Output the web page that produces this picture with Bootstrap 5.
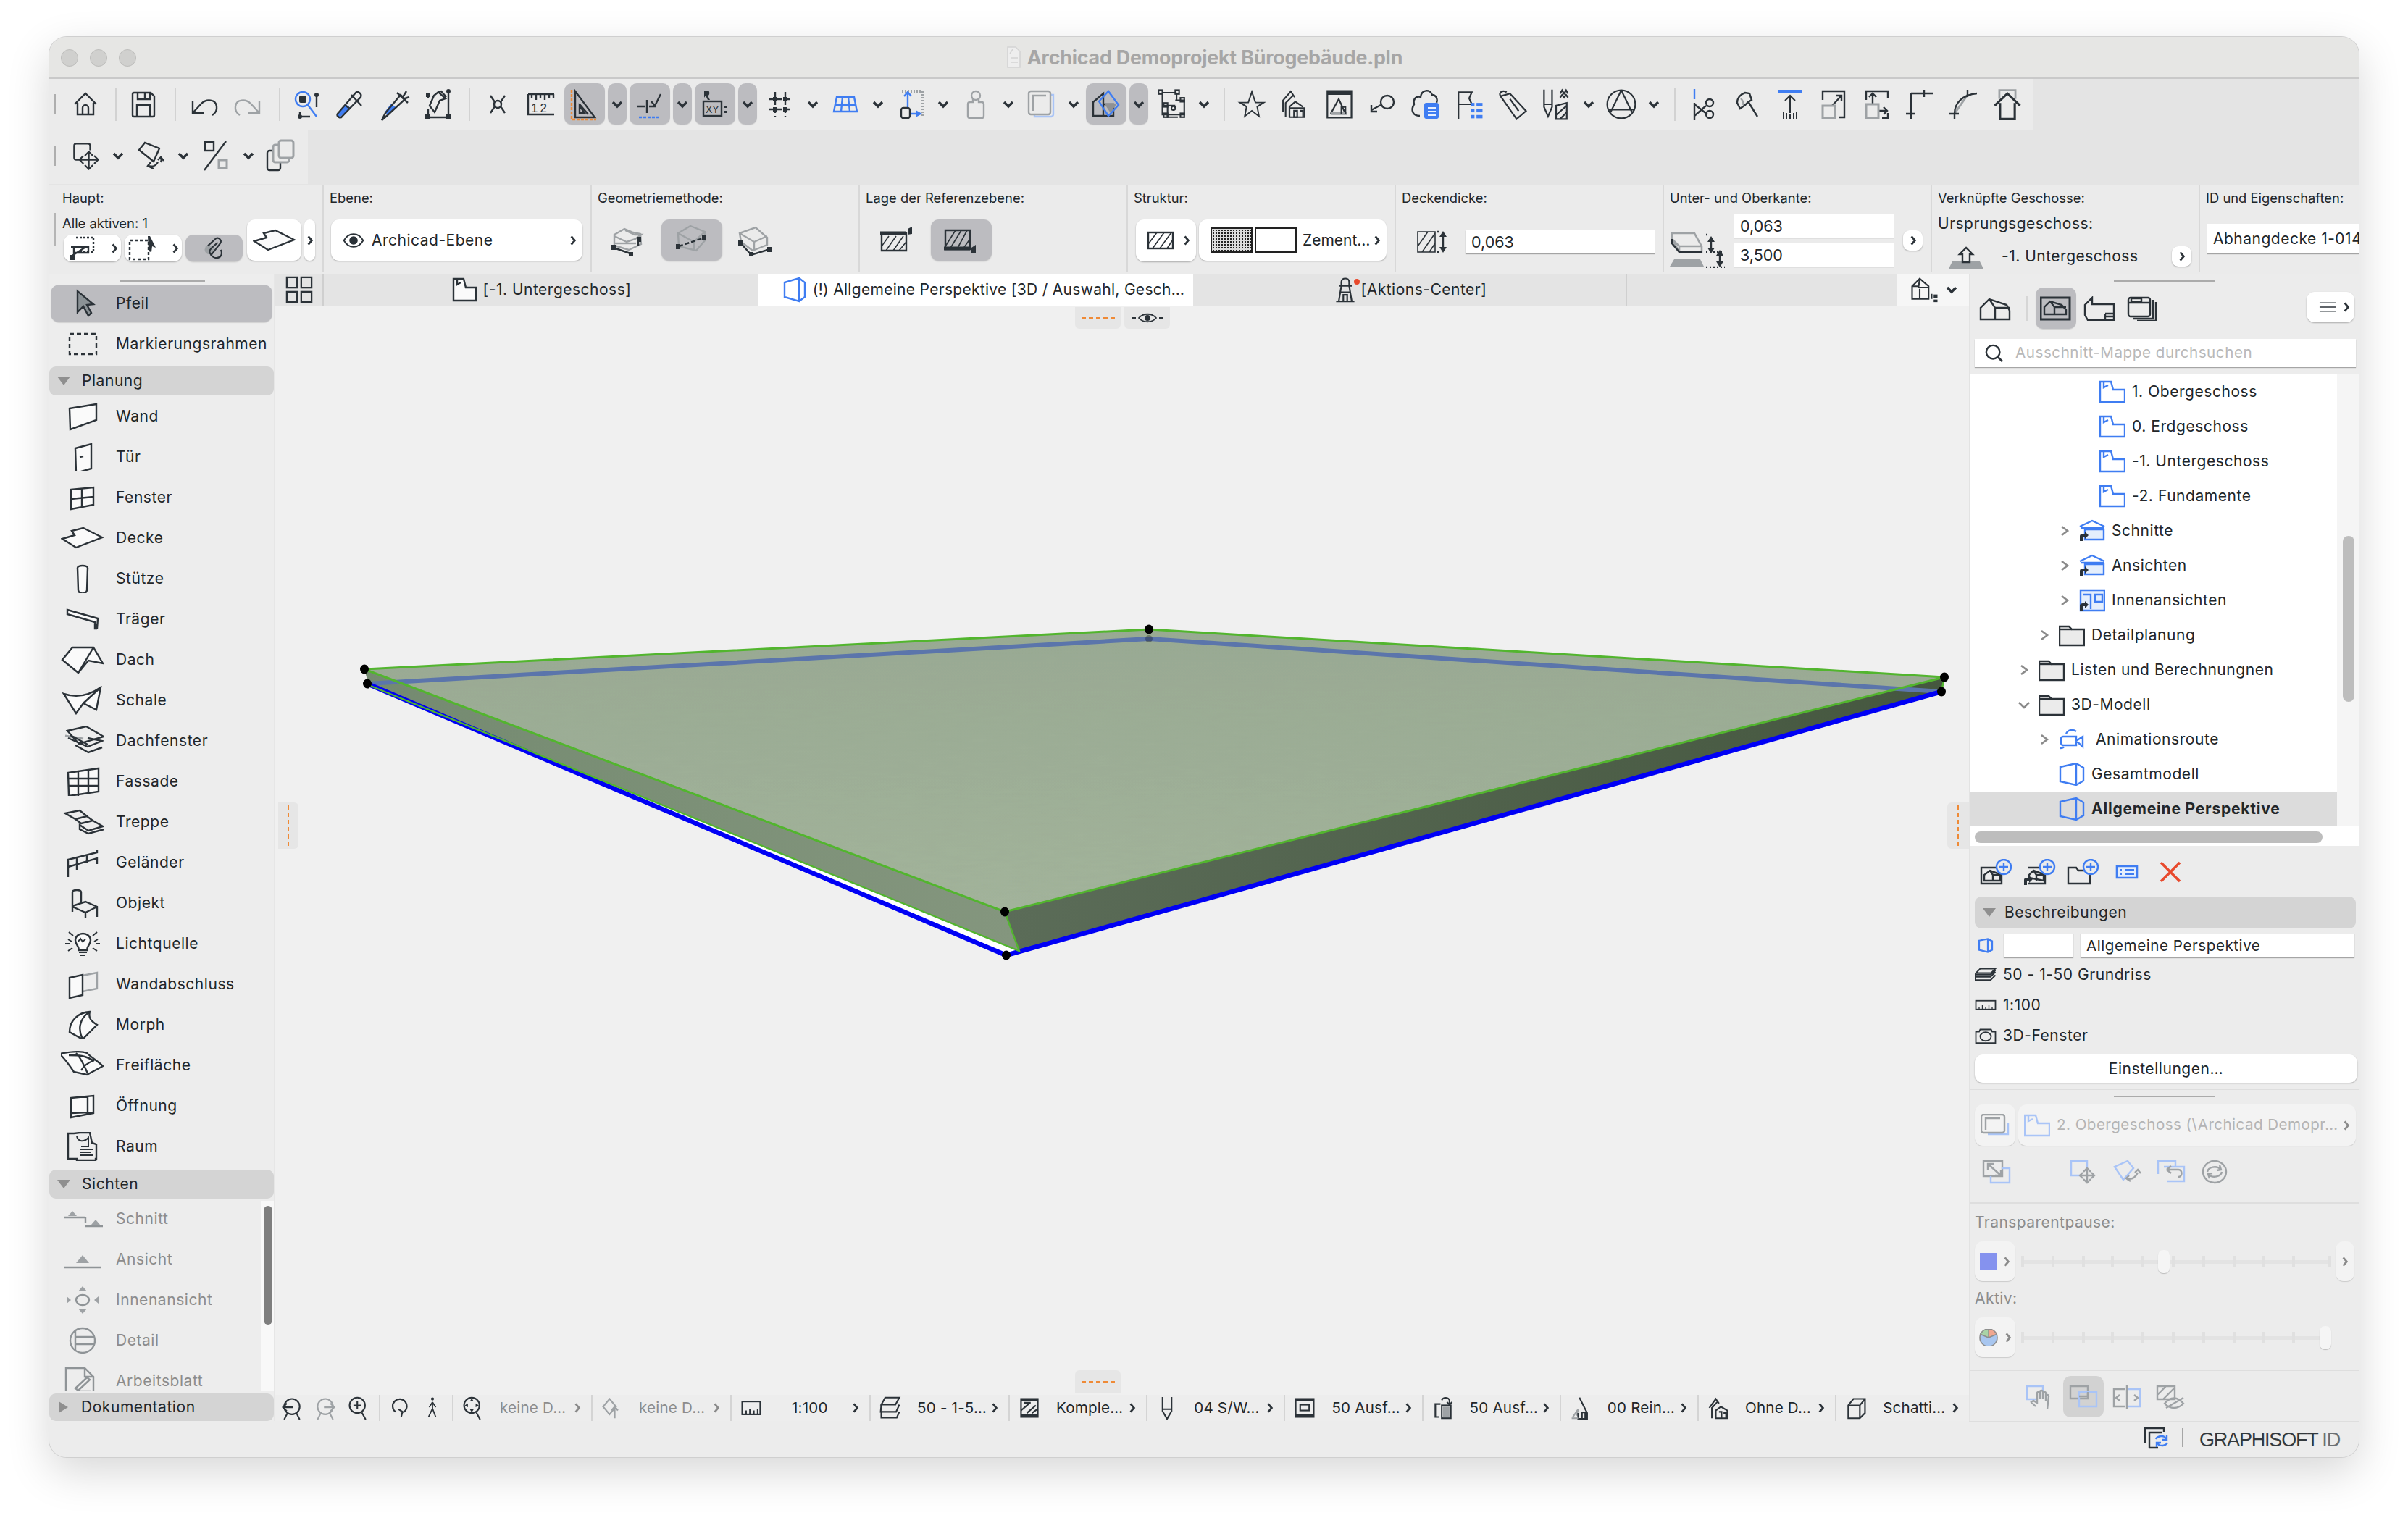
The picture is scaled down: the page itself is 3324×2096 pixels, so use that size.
<!DOCTYPE html>
<html lang="de">
<head>
  <meta charset="UTF-8">
  <meta name="viewport" content="width=device-width, initial-scale=1">
  <title>Archicad Demoprojekt Bürogebäude.pln</title>
  <link href="https://cdn.jsdelivr.net/npm/bootstrap@5.3.0/dist/css/bootstrap.min.css" rel="stylesheet">
  <style>
    html, body { height: 100%; }
    body { background: #fff; overflow: hidden; font-family: Inter, "Noto Sans", "Liberation Sans", sans-serif; color: #222629; }
    svg { display: block; flex: none; fill: none; stroke: #2b3238; stroke-width: 2.4; overflow: visible; }
    .icon-sheet { position: absolute; width: 0; height: 0; }
    .s-blue { stroke: #3f7df2; } .s-grey { stroke: #9ea2a5; } .s-lblue { stroke: #a9c4f7; } .s-orange { stroke: #ef8a36; }
    .f-dark { fill: #2b3238; stroke: none; } .f-blue { fill: #3f7df2; stroke: none; } .f-grey { fill: #9ea2a5; stroke: none; } .f-white { fill: #fafafa; } .f-pale { fill: #e4eefc; }
    .svg-text { fill: #2b3238; stroke: none; font-family: "Liberation Sans", sans-serif; }

    /* window */
    .app-win { position: absolute; left: 68px; top: 51px; width: 3188px; height: 1961px; background: #ececec; border-radius: 24px; overflow: hidden; box-shadow: 0 0 0 1px #cfcfcf, 0 20px 60px rgba(0,0,0,.16); }
    .title-bar { height: 58px; background: #e6e6e4; border-bottom: 2px solid #c9c9c9; position: relative; }
    .light { width: 24px; height: 24px; border-radius: 50%; background: #d0d0ce; border: 1px solid #bdbdbb; }
    .lights { position: absolute; left: 16px; top: 17px; gap: 16px; }
    .title-text { font-weight: 700; font-size: 26.8px; color: #a6a6a6; letter-spacing: -.2px; }
    .tools-zone { height: 147px; background: #e4e4e4; }
    .tool-row { background: #ebebeb; width: fit-content; height: 71px; padding: 6px 4px 8px 0; }
    .tool-row + .tool-row { height: 74px; padding: 6px 5px 10px 0; }
    .tbtn, .tchev { display: flex; align-items: center; justify-content: center; height: 57px; margin-right: 4px; border-radius: 10px; flex: none; }
    .tbtn { width: 56px; } .tchev { width: 26px; }
    .tbtn svg { width: 48px; height: 48px; } .tchev svg { width: 16px; height: 12px; }
    .is-on { background: #bcbcc0; box-shadow: 0 1px 1px rgba(0,0,0,.12); }
    .tsep { width: 22px; height: 57px; display: flex; justify-content: center; align-items: center; flex: none; }
    .tsep::after { content: ""; width: 2px; height: 46px; background: #d2d2d2; }
    .tsep-n { width: 20px; } .tsep-w { width: 24px; } .tsep-m { width: 21px; } .tsep-x { width: 23px; }
    .tgrip { width: 2px; height: 28px; background: #aeaeae; margin: 0 13px 0 7px; flex: none; }

    /* info box */
    .info-box { height: 122px; background: #ebebeb; }
    .info-col { width: 370px; height: 119px; border-right: 2px solid #d8d8d8; padding: 8px 0 0 8px; flex: none; overflow: hidden; }
    .info-first { width: 379px; padding-left: 18px; }
    .info-last { flex: 1 1 0; border-right: 0; }
    .info-lbl { font-size: 18.4px; line-height: 18px; white-space: nowrap; }
    .white-btn { background: #fff; border-radius: 11px; box-shadow: 0 1px 2px rgba(0,0,0,.28); display: flex; align-items: center; flex: none; }
    .grey-btn { background: #bcbcc0; border-radius: 11px; box-shadow: 0 1px 2px rgba(0,0,0,.18); display: flex; align-items: center; justify-content: center; flex: none; }
    .plain-ic { display: flex; align-items: center; justify-content: center; flex: none; }
    .rchev { width: 10px; height: 16px; }
    .fld { background: #fff; border: 0; border-radius: 0; padding: 0 8px; font-size: 21.5px; line-height: 32px; box-shadow: 0 1px 1px rgba(0,0,0,.3); color: #222629; }
    .row-top { margin-top: 21px; }
    .txt-20 { font-size: 21px; letter-spacing: .5px; white-space: nowrap; }
    .haupt-row { margin-top: 17px; position: relative; }
    .haupt-grip { width: 2px; height: 46px; background: #b5b5b5; position: absolute; left: -11px; top: -5px; }
    .haupt-left { width: 255px; flex: none; }
    .haupt-btns { margin-top: 7px; margin-left: 2px; gap: 5px; }
    .hb-small { width: 79px; height: 37px; }
    .hb-big { width: 75px; height: 57px; margin: 4px 0 0 0; justify-content: center; }
    .hb-tiny { width: 15px; height: 57px; margin: 4px 0 0 4px; justify-content: center; }
    .ebene-btn { width: 347px; height: 57px; margin-left: 2px; }
    .ebene-eye { margin: 0 10px 0 16px; }
    .geo-ic { width: 84px; height: 57px; margin-right: 4px; }
    .ref-box { margin-left: 2px; }
    .str-a { width: 83px; height: 58px; margin-left: 3px; }
    .str-b { width: 259px; height: 57px; }
    .sw-dots { width: 58px; height: 35px; border: 2px solid #222; background: #dcdcdc radial-gradient(#222 1.1px, transparent 1.3px) 0 0 / 4px 4px; }
    .sw-blank { width: 58px; height: 35px; border: 2px solid #222; background: #fff; margin-left: 3px; }
    .str-txt { margin-left: 8px; letter-spacing: 0; }
    .thick-row { margin-top: 34px; }
    .thick-ic { margin-left: 20px; }
    .thick-fld { width: 261px; margin-left: 20px; flex: none; }
    .tb-row { margin-top: 14px; position: relative; }
    .tb-row > svg { margin: 24px 13px 0 0; }
    .tb-fields { width: 220px; flex: none; }
    .tb-fld { height: 32px; width: 220px; }
    .tiny-chev { width: 27px; height: 28px; justify-content: center; border-radius: 9px; }
    .tb-chev { margin: 22px 0 0 13px; }
    .link-head { margin-top: 15px; line-height: 24px; }
    .link-row { margin-top: 15px; }
    .link-row > svg { margin-left: 16px; }
    .link-txt { margin-left: 24px; }
    .link-row .tiny-chev { margin-right: 10px; }
    .id-fld { margin-top: 27px; height: 41px; line-height: 41px; width: 220px; white-space: nowrap; overflow: hidden; margin-left: 2px; }

    /* tool box */
    .main-zone { height: 1584px; }
    .left-panel { width: 312px; background: #ededed; border-right: 2px solid #e6e6e6; flex: none; padding-top: 15px; position: relative; overflow: hidden; }
    .drag-grip { position: absolute; top: 9px; height: 2px; background: #ababab; }
    .grip-left { left: 97px; width: 118px; }
    .grip-right { left: 198px; width: 140px; }
    .grip-right2 { position: relative; top: auto; left: 198px; width: 140px; margin-top: 8px; margin-bottom: 10px; flex: none; }
    .tool-item { height: 56px; display: flex; align-items: center; font-size: 21px; letter-spacing: .55px; padding-left: 16px; white-space: nowrap; flex: none; }
    .tool-item svg { width: 60px; height: 40px; margin-right: 16px; }
    .tool-sel { height: 52px; background: #bcbcc0; border-radius: 12px; margin: 0 2px; padding-left: 14px; box-shadow: 0 1px 1px rgba(0,0,0,.12); }
    .marq-item { margin-top: 2px; margin-bottom: 3px; }
    .is-off { color: #8c8c8c; }
    .is-off svg { stroke: #8f9497; }
    .sect-head { height: 40px; background: #d4d4d4; border-radius: 9px; display: flex; align-items: center; font-size: 21px; letter-spacing: .55px; flex: none; }
    .tri-down { width: 0; height: 0; border-left: 9px solid transparent; border-right: 9px solid transparent; border-top: 12px solid #8f8f8f; margin: 0 16px 0 11px; }
    .tri-right { width: 0; height: 0; border-top: 8px solid transparent; border-bottom: 8px solid transparent; border-left: 13px solid #8f8f8f; margin: 0 18px 0 13px; }
    .tool-list-top { height: 1px; flex: none; }
    .sect-sicht { margin-top: 4px; }
    .sect-doc { margin-top: 4px; height: 38px; }
    .views-wrap { height: 262px; position: relative; overflow: hidden; margin-top: 3px; flex: none; }
    .views-wrap .tool-item:first-child { margin-top: -3px; }
    .views-track { position: absolute; right: 0; top: 0; bottom: 0; width: 18px; background: #f8f8f8; }
    .views-thumb { position: absolute; right: 2px; top: 7px; width: 12px; height: 164px; background: #7e7e7e; border-radius: 6px; }

    /* centre */
    .center-col { flex: 1 1 0; min-width: 0; }
    .tab-strip { height: 44px; background: #e4e4e4; font-size: 21px; letter-spacing: .5px; flex: none; }
    .grid-btn { width: 67px; height: 44px; border-right: 2px solid #cfcfcf; }
    .view-tab { width: 600px; height: 44px; gap: 8px; white-space: nowrap; }
    .view-tab svg { width: 36px; height: 36px; }
    .tab-on { background: #fff; letter-spacing: .3px; gap: 7px; padding-left: 20px; }
    .tab-rule { border-right: 2px solid #cfcfcf; width: 599px; }
    .tab-view { width: 99px; background: #f6f6f6; margin-left: auto; }
    .tab-dot { width: 8px; height: 8px; border-radius: 50%; background: #e8492c; margin: -22px -6px 0 -14px; flex: none; }
    .canvas-3d { flex: 1 1 0; background: #f0f0f0; position: relative; overflow: hidden; }
    .canvas-3d > svg { position: absolute; left: 0; top: 0; width: 100%; height: 100%; }
    .float-tab { position: absolute; background: #e6e6e6; display: flex; align-items: center; justify-content: center; }
    .ft-top { top: 2px; width: 63px; height: 30px; border-radius: 0 0 6px 6px; }
    .ft-top svg { width: 48px; height: 16px; }
    .ft-a { left: 1104px; } .ft-b { left: 1172px; }
    .ft-left { left: 4px; top: 686px; width: 28px; height: 64px; border-radius: 0 6px 6px 0; }
    .ft-right { right: 0; top: 686px; width: 30px; height: 64px; border-radius: 6px 0 0 6px; }
    .ft-bottom { left: 1104px; bottom: 3px; width: 63px; height: 31px; border-radius: 6px 6px 0 0; }
    .dash-h { width: 46px; height: 0; border-top: 2px dashed #ef8a36; }
    .dash-v { width: 0; height: 56px; border-left: 2px dashed #ef8a36; }

    /* status bar */
    .stat-bar { height: 36px; background: #ededed; font-size: 20.6px; letter-spacing: .2px; flex: none; }
    .stat-tool { height: 36px; flex: none; border-right: 2px solid #d4d4d4; }
    .stat-tool svg { width: 32px; height: 32px; }
    .stat-tool-a { width: 145px; padding-left: 7px; gap: 14px; }
    .stat-tool-b { width: 101px; padding-left: 11px; gap: 13px; }
    .stat-seg { width: 190.2px; height: 36px; border-right: 2px solid #d4d4d4; padding-left: 11px; position: relative; white-space: nowrap; flex: none; }
    .stat-wide { width: 192px; }
    .stat-seg svg { width: 32px; height: 32px; }
    .stat-seg svg.stat-chev { position: absolute; right: 14px; top: 10px; width: 10px; height: 16px; }
    .stat-txt { margin-left: 21px; }
    .scale-txt { margin-left: 40px; }
    .stat-last { border-right: 0; width: 183px; }

    /* navigator */
    .right-panel { width: 538px; flex: none; border-left: 2px solid #e3e3e3; position: relative; background: #ececec; overflow: hidden; }
    .nav-tabs-box { height: 90px; padding: 19px 6px 0 6px; }
    .nav-ic { width: 56px; height: 57px; display: flex; align-items: center; justify-content: center; border-radius: 10px; flex: none; }
    .nav-ic svg { width: 44px; height: 34px; }
    .nav-rule { width: 2px; height: 34px; background: #d6d6d6; margin: 12px 11px 0 15px; flex: none; }
    .nav-next { margin-left: 4px; }
    .nav-menu { width: 66px; height: 42px; margin-top: 6px; }
    .search-box { margin: 0 4px 0 6px; height: 39px; background: #fff; box-shadow: 0 1px 1px rgba(0,0,0,.3); font-size: 20.6px; letter-spacing: .55px; color: #b8b8b8; gap: 16px; padding-left: 14px; white-space: nowrap; }
    .map-tree { position: relative; height: 651px; margin-top: 10px; background: #fff; overflow: hidden; font-size: 21px; letter-spacing: .55px; flex: none; }
    .tree-line { height: 48px; display: flex; align-items: center; white-space: nowrap; width: 506px; padding-left: 118px; }
    .tree-line svg.tr-ic { width: 36px; height: 32px; margin-right: 9px; }
    .tree-line .tr-wide { margin-right: 15px !important; }
    .tree-sel { background: #dcdcdc; font-weight: 700; letter-spacing: .8px; }
    .slot { width: 24px; margin-right: 8px; flex: none; display: flex; justify-content: center; }
    .slot svg { width: 16px; height: 16px; stroke-width: 2.6; stroke: #8a8a8a; }
    .lv4 { padding-left: 146px; } .lv2 { padding-left: 90px; } .lv1 { padding-left: 62px; }
    .lv4 .slot { width: 0; margin: 0 0 0 32px; }
    .v-track { position: absolute; left: 506px; top: 0; height: 623px; width: 30px; background: #f5f5f5; }
    .v-scroll { position: absolute; left: 514px; top: 223px; width: 16px; height: 229px; border-radius: 8px; background: #bdbdbd; }
    .h-scroll { position: absolute; left: 6px; top: 770px; width: 480px; height: 16px; border-radius: 8px; background: #bdbdbd; }
    .act-row { height: 70px; padding: 18px 0 0 6px; flex: none; }
    .act-ic { width: 60px; display: flex; justify-content: center; flex: none; }
    .act-ic svg { width: 46px; height: 36px; }
    .pad-box { padding: 0 4px 0 6px; }
    .head-desc { height: 44px; }
    .head-desc .tri-down { margin-right: 12px; }
    .desc-top { margin-top: 7px; height: 33px; margin-bottom: 3px; }
    .desc-top > svg { width: 30px; height: 21px; margin-right: 10px; }
    .desc-field { height: 33px; font-size: 20.6px; letter-spacing: .55px; line-height: 33px; }
    .desc-a { width: 96px; flex: none; margin-right: 10px; }
    .desc-b { width: 378px; flex: none; }
    .desc-line { height: 42px; font-size: 21px; letter-spacing: .55px; gap: 9px; }
    .desc-line svg { width: 30px; height: 21px; }
    .wide-btn { width: 528px; height: 39px; border-radius: 11px; font-size: 21px; letter-spacing: .55px; background: #fff; box-shadow: 0 1px 2px rgba(0,0,0,.28); border: 0; padding: 0; margin-top: 5px; color: #222629; display: block; }
    .h-rule { height: 2px; background: #dedede; flex: none; }
    .off-row { padding: 0 4px 0 6px; gap: 4px; flex: none; }
    .off-btn { background: #f3f3f3; border-radius: 11px; box-shadow: 0 1px 1px rgba(0,0,0,.14); height: 57px; display: flex; align-items: center; flex: none; }
    .off-a { width: 56px; } .off-b { flex: 1 1 0; min-width: 0; } .off-c { width: 26px; }
    .off-txt { color: #b4b4b4; font-size: 20.6px; letter-spacing: .45px; white-space: nowrap; margin-left: 9px; }
    .off-icons { height: 78px; padding: 0 0 6px 16px; flex: none; }
    .oi-b { margin-left: 81px; } .oi-c { margin-left: 20px; }
    .trans-box { padding-top: 14px; flex: none; }
    .mini-lbl { font-size: 21px; letter-spacing: .45px; color: #8c8c8c; line-height: 24px; }
    .aktiv-lbl { margin-top: 12px; }
    .slider-row { margin-top: 14px; height: 55px; }
    .slider-row .off-btn { height: 55px; }
    .slider-box { width: 428px; height: 34px; margin: 0 6px 0 8px; position: relative; flex: none; }
    .slider-line { position: absolute; left: 0; right: 0; top: 15px; height: 5px; background: #e3e3e3; }
    .slider-tick { position: absolute; top: 9px; width: 4px; height: 16px; background: #e0e0e0; }
    .slider-knob { position: absolute; top: 1px; width: 16px; height: 32px; border-radius: 7px; background: #f5f5f5; box-shadow: 0 1px 1px rgba(0,0,0,.2); }
    .t0{left:0}.t1{left:42px}.t2{left:84px}.t3{left:124px}.t4{left:166px}.t5{left:208px}.t6{left:250px}.t7{left:292px}.t8{left:332px}.t9{left:374px}.t10{left:424px}
    .knob-mid { left: 189px; } .knob-end { left: 412px; }
    .swatch-blue { width: 24px; height: 24px; background: #8592ee; }
    .trans-rule { margin-top: 17px; }
    .bottom-tools { height: 69px; padding-top: 7px; flex: none; }
    .bt-ic { width: 56px; height: 57px; display: flex; align-items: center; justify-content: center; border-radius: 10px; margin-right: 4px; flex: none; }
    .bt-first { margin-left: 68px; }
    .bt-on { background: #d2d2d2; }

    /* footer */
    .foot-bar { height: 50px; background: #ececec; flex: none; }
    .foot-wrap { margin-left: 2650px; width: 538px; height: 50px; border-top: 2px solid #dedede; position: relative; }
    .foot-brand { position: absolute; left: 318px; top: 4px; font-size: 27px; letter-spacing: -1.2px; color: #33393d; font-family: "Liberation Sans", sans-serif; white-space: nowrap; }
    .foot-brand span { color: #6a6f72; }
    .foot-sync { position: absolute; left: 240px; top: 4px; width: 36px; height: 36px; }
    .foot-sep { position: absolute; left: 294px; top: 8px; width: 2px; height: 26px; background: #a6a6a6; }
  </style>
</head>
<body>

<!-- icon sheet -->
<svg class="icon-sheet">
  <defs>
    <symbol id="cd" viewBox="0 0 16 12"><path d="M2 3l6 6 6-6" stroke-width="3.4"/></symbol>
    <symbol id="cr" viewBox="0 0 12 20"><path d="M3 3l6 7-6 7" stroke-width="3.4"/></symbol>
    <symbol id="crg" viewBox="0 0 12 20"><path d="M3 3l6 7-6 7" stroke="#8a8a8a" stroke-width="3.4"/></symbol>
    <symbol id="trc" viewBox="0 0 16 16"><path d="M4 2l8 6-8 6"/></symbol>
    <symbol id="trd" viewBox="0 0 16 16"><path d="M1 5l7 7 7-7"/></symbol>

    <!-- main toolbar -->
    <symbol id="home" viewBox="0 0 48 48"><path d="M9 24L24 9l15 15M13 22v16h22V22M20 38v-9a4 4 0 0 1 8 0v9"/></symbol>
    <symbol id="save" viewBox="0 0 48 48"><path d="M9 10a2 2 0 0 1 2-2h23l5 5v26a2 2 0 0 1-2 2H11a2 2 0 0 1-2-2zM16 8v9h17V8M26 9v7M15 41V25h18v16"/></symbol>
    <symbol id="undo" viewBox="0 0 48 48"><path d="M8 20v16h15M8 36l12-13c7-7 20-6 21 4 1 6-3 10-6 12"/></symbol>
    <symbol id="redo" viewBox="0 0 48 48"><path class="s-grey" d="M40 20v16H25M40 36L28 23c-7-7-20-6-21 4-1 6 3 10 6 12"/></symbol>
    <symbol id="mzoom" viewBox="0 0 48 48"><circle class="s-blue" cx="17" cy="17" r="10"/><rect class="f-dark" x="12" y="12" width="10" height="10" rx="2"/><path class="s-blue" d="M24 25l12 16"/><path d="M36 12v16M13 41h14M13 34v7"/><circle class="f-dark" cx="36" cy="11" r="3"/><circle class="f-dark" cx="13" cy="41" r="3"/></symbol>
    <symbol id="drop" viewBox="0 0 48 48"><path class="f-blue" d="M9 41c-2 2-6-1-4-4l11-13 7 5z"/><path d="M5 37L30 8c2-3 9 1 7 6L11 41c-2 3-8 0-6-4zM24 11l14 15M15 25l7 5"/></symbol>
    <symbol id="dropt" viewBox="0 0 48 48"><path class="f-blue" d="M14 38l-4-3 9-12 6 5z"/><path d="M6 46l5-10 21-25 6 6-24 22zM27 8l15 14M40 6l-5 8M44 14l-6 2"/></symbol>
    <symbol id="hammer" viewBox="0 0 48 48"><path d="M12 26l6-14 6-5 10 9-8 3-7 16zM24 7l4-1 7 8M38 6v34M10 42h28M10 10v6M10 30v12"/><circle class="f-dark" cx="38" cy="6" r="3"/><rect class="f-dark" x="6" y="38" width="6" height="7"/><rect class="f-dark" x="35" y="38" width="6" height="7"/><rect class="f-dark" x="7" y="8" width="5" height="6"/></symbol>
    <symbol id="xcross" viewBox="0 0 48 48"><path d="M14 12l6 9M34 12l-6 9M14 36l6-9M34 36l-6-9"/><circle cx="24" cy="24" r="5"/></symbol>
    <symbol id="ruler" viewBox="0 0 48 48"><path d="M6 10h36M6 10v28h36M11 10v6M17 10v8M23 10v6M29 10v8M35 10v6M41 10v6"/><text class="svg-text" x="10" y="35" font-size="17" letter-spacing="3">12</text></symbol>
    <symbol id="square" viewBox="0 0 48 48"><path d="M11 6L38 42H11zM17 24l12 14"/><path d="M17 26v10h7z"/><path class="s-orange" stroke-dasharray="4 2" d="M6 4v41h34"/></symbol>
    <symbol id="checkl" viewBox="0 0 48 48"><path d="M26 20l5 6 8-16M7 27h10M23 27h10M20 18v18"/><path class="s-blue" stroke-dasharray="4 2" d="M9 42h28"/></symbol>
    <symbol id="xy" viewBox="0 0 48 48"><path class="f-dark" d="M9 5h5c3 0 3 7 0 7l3 6h-3l-3-6-2 3z"/><rect x="8" y="20" width="25" height="20"/><text class="svg-text" x="11" y="36" font-size="14">XY</text><rect class="f-dark" x="37" y="26" width="3" height="3"/><rect class="f-dark" x="37" y="33" width="3" height="3"/></symbol>
    <symbol id="gridsn" viewBox="0 0 48 48"><path stroke-dasharray="7 4" d="M8 17h32M8 31h32M17 7v34M31 7v34"/><rect class="f-dark" x="14" y="14" width="6" height="6"/><rect class="f-dark" x="28" y="14" width="6" height="6"/><rect class="f-dark" x="14" y="28" width="6" height="6"/><rect class="f-dark" x="28" y="28" width="6" height="6"/></symbol>
    <symbol id="plane" viewBox="0 0 48 48"><path class="s-blue" d="M12 14h24l4 20H8zM9 25h30M20 14l-2 20M28 14l2 20"/></symbol>
    <symbol id="offset" viewBox="0 0 48 48"><path class="s-grey" stroke-dasharray="2 2" d="M12 6h28v36" stroke-width="4"/><path class="s-blue" d="M20 8v22M15 13l5-6 5 6"/><path class="f-blue" d="M31 32l9 5-9 5z"/><path class="s-blue" d="M24 37h10"/><rect x="11" y="29" width="12" height="14" rx="3"/></symbol>
    <symbol id="lockg" viewBox="0 0 48 48"><circle class="s-grey" cx="24" cy="12" r="6"/><path class="s-grey" d="M20 17v4h-4c-2 0-3 1-3 3v16c0 2 1 3 3 3h16c2 0 3-1 3-3V24c0-2-1-3-3-3h-4v-4"/></symbol>
    <symbol id="layg" viewBox="0 0 48 48"><path class="s-lblue" d="M37 11h4v27a3 3 0 0 1-3 3H15v-4"/><rect class="s-grey" x="7" y="6" width="30" height="32" rx="3"/><path class="s-grey" d="M13 33V12h18"/></symbol>
    <symbol id="viewact" viewBox="0 0 48 48"><path d="M6 21L20 9v31H6zM20 24h14v16H20"/><path fill="#8f9194" stroke="none" d="M22 24h16l-8 12z"/><path class="s-blue" d="M14 20L27 6l14 19-14 15z"/></symbol>
    <symbol id="nodes" viewBox="-3 -3 54 54"><path d="M10 6h22M10 6v20h20M32 6v12M30 18h14v22H10V26M18 26v18h16"/><rect x="4" y="2" width="6" height="6"/><rect x="30" y="2" width="6" height="6"/><rect x="38" y="14" width="6" height="6"/><rect x="38" y="38" width="6" height="6"/><rect x="12" y="38" width="6" height="6"/><rect x="12" y="22" width="6" height="6"/><circle cx="27" cy="30" r="3"/></symbol>
    <symbol id="star" viewBox="-3 -3 54 54"><path d="M24 3l6 18h14l-11 7 3 16-12-9-12 9 3-16L4 21h14z" transform="translate(2 2) scale(.92)"/></symbol>
    <symbol id="housest" viewBox="-3 -3 54 54"><path d="M5 36V18L17 4l6 9M9 44V22L21 10M15 44V28l9-8 12 8"/><path d="M15 30h23v14H15z"/><path d="M22 34h5v10h-5zM31 34h5v10"/></symbol>
    <symbol id="frameh" viewBox="-2 -2 52 52"><path d="M7 4h36v40H7z"/><path class="f-dark" d="M7 4h36v6H7z"/><path d="M12 38l12-22 10 22"/><path class="s-grey" d="M12 38h24" stroke-width="4"/><path d="M28 38V28h6v10"/></symbol>
    <symbol id="keyb" viewBox="0 0 48 48"><circle cx="31" cy="21" r="9"/><path d="M22 25L9 32M9 25v9h8"/></symbol>
    <symbol id="cloudd" viewBox="0 0 48 48"><path d="M16 40C6 40 3 32 8 24 6 16 12 12 17 14 18 4 30 2 33 11c5 0 8 5 6 11"/><rect class="f-blue" x="22" y="22" width="20" height="22" rx="3"/><path d="M27 29h11M27 34h11M27 39h11" stroke="#e8f0ff" stroke-width="2"/></symbol>
    <symbol id="flagd" viewBox="-2 -2 52 52"><path d="M8 46V6h20l-4 9 4 9H8"/><rect class="f-blue" x="27" y="22" width="5" height="5"/><rect class="f-blue" x="35" y="22" width="9" height="5"/><rect class="f-blue" x="27" y="31" width="5" height="5"/><rect class="f-blue" x="35" y="31" width="9" height="5"/><rect class="f-blue" x="27" y="40" width="5" height="5"/><rect class="f-blue" x="35" y="40" width="9" height="5"/></symbol>
    <symbol id="tagd" viewBox="-2 -2 52 52"><path d="M6 12L20 8 44 34 30 46z"/><path d="M20 16L33 34M6 12c-4-6 4-10 9-6"/></symbol>
    <symbol id="penh" viewBox="-2 -2 52 52"><path d="M6 2v26l6 14 6-14V2M6 24h12M24 46V26l16-4v24zM24 40l16-14M30 46l10-10"/><path d="M30 8l3-5 3 5 3-5 3 5M30 14l3-4 3 4 3-4 3 4"/></symbol>
    <symbol id="circtri" viewBox="-2 -2 52 52"><circle cx="24" cy="24" r="21"/><path d="M24 3L8 36M24 3l16 33M5 32h38"/></symbol>
    <symbol id="sciss" viewBox="0 0 48 48"><path class="s-blue" d="M12 3v14"/><path d="M12 22v24M12 24l18 14M12 40l16-14"/><circle cx="33" cy="22" r="5"/><circle cx="33" cy="38" r="5"/></symbol>
    <symbol id="axe" viewBox="0 0 48 48"><path d="M22 8c-6 2-11 7-11 14l4 8 7-5 4-4 5-3-3-9zM26 20l13 21"/><path d="M16 16c3 3 4 6 3 9" class="s-grey"/></symbol>
    <symbol id="arrup" viewBox="0 0 48 48"><path class="s-blue" d="M7 6h34" stroke-width="4"/><path d="M24 36V12M17 19l7-7 7 7M15 44V34M24 44V38M33 44V34M19 44V36M29 44V36" stroke-width="2"/></symbol>
    <symbol id="extend" viewBox="0 0 48 48"><path d="M9 18V6h30v36h-8"/><path d="M22 26L35 12M28 12h7v7"/><path class="s-grey" d="M9 26h17v17H9z" stroke-width="3"/></symbol>
    <symbol id="split" viewBox="0 0 48 48"><path d="M9 18V6h30v10M39 36v7h-8M18 24V9M13 14l5-5 5 5M27 33h11M33 28l5 5-5 5"/><path class="s-grey" d="M9 24h17v19H9z" stroke-width="3"/></symbol>
    <symbol id="corner" viewBox="0 0 48 48"><path d="M11 9h31M11 9v32M29 4v10M4 37h13M11 37v7"/></symbol>
    <symbol id="cornerc" viewBox="0 0 48 48"><path class="s-grey" d="M11 37L29 11" stroke-width="3"/><path d="M11 37C11 22 22 11 42 9M29 4v10M4 37h13M11 37v7"/></symbol>
    <symbol id="harr" viewBox="-2 -2 52 52"><path class="s-grey" d="M12 16V3h24v13" stroke-width="3"/><path d="M5 26L24 8l19 18M13 22v24h22V22" stroke-width="3.4"/></symbol>

    <!-- second toolbar -->
    <symbol id="move" viewBox="-2 -2 52 52"><path d="M17 30H10a3 3 0 0 1-3-3V9a3 3 0 0 1 3-3h18a3 3 0 0 1 3 3v7M29 18v26M17 30h24M23 24l6-6 6 6M23 38l6 6 6-6M21 24l-6 6 6 6M37 24l6 6-6 6"/></symbol>
    <symbol id="rotate" viewBox="0 0 48 48"><path d="M8 16l8-10 20 8-8 18z"/><path d="M20 38c6 2 11 0 14-5M28 42l-8-4 4-5M38 27c1 2 1 4 0 6M34 30l4-4 4 5"/></symbol>
    <symbol id="percent" viewBox="0 0 48 48"><rect x="9" y="5" width="12" height="12"/><path d="M8 44L38 4"/><rect class="s-grey" x="28" y="30" width="11" height="11" stroke-width="3"/></symbol>
    <symbol id="multi" viewBox="0 0 48 48"><rect x="5" y="17" width="18" height="27" rx="3"/><rect class="s-grey" x="13" y="9" width="22" height="24" rx="3" fill="#ebebeb" stroke-width="3"/><rect class="s-grey" x="21" y="3" width="20" height="24" rx="3" fill="#ebebeb" stroke-width="3"/></symbol>

    <!-- info box -->
    <symbol id="gHaupt1" viewBox="0 0 44 34"><path stroke-dasharray="3 2" d="M13 2h24v20H18"/><path d="M6 15h24v8l-20 0M10 14v16M6 28l22-14"/><rect class="f-dark" x="5" y="26" width="6" height="7"/></symbol>
    <symbol id="gHaupt2" viewBox="0 0 44 34"><path stroke-dasharray="4 3" d="M3 6h26v26H3z"/><path class="f-dark" d="M28 0l3 0 8 16-5-2-1 8-4-1z"/></symbol>
    <symbol id="magnet" viewBox="0 0 44 40"><circle class="f-grey" cx="14" cy="22" r="7"/><path d="M12 16L24 5c4-3 10 2 7 7L17 30c4 6 12 6 15 1 2-3 1-6 0-9"/><path d="M17 30c-3-3-3-7 0-10l10-9"/></symbol>
    <symbol id="eye" viewBox="0 0 36 36"><path d="M2 18c8-14 24-14 32 0-8 14-24 14-32 0z"/><circle class="f-dark" cx="18" cy="18" r="7"/></symbol>
    <symbol id="geo1" viewBox="0 0 48 44"><path class="s-grey" d="M5 14l14-8 12 5 10 2 1 14-17 8-20-6z"/><path class="s-grey" d="M20 8l13 6 9 0-8 6 0 0-12 4-17-8"/><path class="s-grey" d="M5 26h30"/><path d="M4 32l26 9M38 21v8"/><rect class="f-dark" x="1" y="28" width="6" height="7"/><rect class="f-dark" x="25" y="38" width="6" height="7"/><rect class="f-dark" x="37" y="17" width="5" height="7"/></symbol>
    <symbol id="geo2" viewBox="0 0 48 44"><path class="s-grey" d="M5 12l17-10 20 8v12L30 36 6 30zM5 12l22 12 15-14M27 24v12"/><path stroke-dasharray="6 3" d="M6 30l36-12"/><rect class="f-dark" x="2" y="27" width="6" height="7"/><rect class="f-dark" x="38" y="15" width="6" height="7"/></symbol>
    <symbol id="geo3" viewBox="0 0 48 44"><path class="s-grey" d="M2 12l22-8 16 14v10l-20 8-16-12zM2 12l20 12 18-8M22 24v12"/><path d="M2 24l16 18 26-8"/><rect class="f-dark" x="0" y="22" width="6" height="7"/><rect class="f-dark" x="15" y="38" width="6" height="7"/><rect class="f-dark" x="40" y="31" width="6" height="7"/></symbol>
    <symbol id="ref1" viewBox="0 0 48 32"><path d="M2 6h34v24H2z"/><path d="M2 24l10-14M8 30l14-20M18 30l14-20M26 30l10-12" stroke-width="1.6"/><path d="M0 6h36" stroke-width="5"/><path class="f-dark" d="M38 8V0l6-3v10z"/></symbol>
    <symbol id="ref2" viewBox="0 0 48 32"><path d="M2 2h34v26H2z"/><path d="M2 24l14-22M8 28L24 2M18 28L32 2M26 28l10-14" stroke-width="1.6"/><path d="M0 27h36" stroke-width="5"/><path class="f-dark" d="M38 26v8l6 3V22z"/></symbol>
    <symbol id="hatch" viewBox="0 0 36 26"><rect x="1" y="2" width="34" height="22"/><path d="M1 18L13 2M7 24L23 2M17 24L33 2M27 24l8-12" stroke-width="1.6"/></symbol>
    <symbol id="thick" viewBox="0 0 48 36"><path stroke-width="1.6" d="M2 4h24v28H2zM2 24L16 4M8 32L26 6M18 32l8-12"/><path d="M28 4h4M28 32h4M37 6v24"/><path class="f-dark" d="M37 3l-5 8h10zM37 33l-5-8h10z"/></symbol>
    <symbol id="topbot" viewBox="0 0 76 50"><path class="s-grey" d="M3 2h31l10 18v8H13L3 10zM3 10l10 10h31M13 20v8" stroke-width="2.6"/><path d="M3 10v6l10 12h31"/><path class="f-grey" d="M6 38h36l5 10H0z"/><path d="M57 12v14"/><path class="f-dark" d="M57 6l-5 8h10zM57 30l-5-8h10z"/><path d="M69 30v14"/><path class="f-dark" d="M69 25l-5 8h10zM69 49l-5-8h10z"/><path stroke-dasharray="2 3" d="M50 49h26M50 4h6M50 28h24"/></symbol>
    <symbol id="linkh" viewBox="0 0 48 36"><path class="f-grey" d="M4 25h38l5 10H-1z"/><path d="M23 6L14 15h4v11h10V15h4z" fill="#ebebeb"/></symbol>

    <!-- side tools -->
    <symbol id="p-arrow" viewBox="0 0 60 40"><path fill="#8b9296" d="M23 3v29l8-8 7 13 4-4-6-11 9-1z"/></symbol>
    <symbol id="p-marq" viewBox="0 0 60 40"><path stroke-dasharray="6 4" d="M12 6h37v28H12z"/></symbol>
    <symbol id="p-wall" viewBox="0 0 60 40"><path class="f-white" d="M12 9l37-6v22L13 38z"/></symbol>
    <symbol id="p-door" viewBox="0 0 60 40"><path class="f-white" d="M20 8l22-6v34l-21 6z"/><path d="M26 20l5-1"/></symbol>
    <symbol id="p-window" viewBox="0 0 60 40"><path class="f-white" d="M14 9l31-3v24l-31 6zM29 7v28M14 22l31-3"/></symbol>
    <symbol id="p-slab" viewBox="0 0 60 40"><path class="f-white" d="M2 21l17-5-4-6 16-4 26 13-36 14z"/></symbol>
    <symbol id="p-col" viewBox="0 0 60 40"><ellipse class="f-white" cx="30" cy="5" rx="7" ry="3"/><path class="f-white" d="M23 5l1 31c1 6 11 6 12 0l1-31"/></symbol>
    <symbol id="p-beam" viewBox="0 0 60 40"><path class="f-white" d="M9 7l42 12-1 14-3-9L9 13zM47 24v9h3"/></symbol>
    <symbol id="p-roof" viewBox="0 0 60 40"><path class="f-white" d="M2 20L16 3h29l13 22-20-4-14 17zM45 3L24 38"/></symbol>
    <symbol id="p-shell" viewBox="0 0 60 40"><path class="f-white" d="M4 11c12 4 30 6 51-9l-6 31-18-9-10 14z"/><path d="M55 2L31 24"/></symbol>
    <symbol id="p-skyl" viewBox="0 0 60 40"><path class="s-grey" d="M6 13l25 4" stroke-width="3"/><path d="M9 6l26-6 24 14-34 10zM10 16l27 12 20-8-20-4M13 12l24 13M20 26l18 10 19-7"/></symbol>
    <symbol id="p-curt" viewBox="0 0 60 40"><path class="f-white" d="M10 8l42-6v32l-41 6zM10 16h42M10 26h42M24 6v34M38 4v32"/></symbol>
    <symbol id="p-stair" viewBox="0 0 60 40"><path d="M6 8l20-4 10 8-16 4zM20 16l16-4 8 6-16 4zM28 22l16-4 14 8-20 6-12-8v6l12 6 22-6"/></symbol>
    <symbol id="p-rail" viewBox="0 0 60 40"><path d="M10 40V16l40-10v-4M10 26l40-12v8M22 14v16M36 10v10"/></symbol>
    <symbol id="p-chair" viewBox="0 0 60 40"><path d="M16 32V5c0-4 12-4 12 0v14M16 24l18-6 16 7v14M16 25l18 8 16-8M34 33v8"/></symbol>
    <symbol id="p-light" viewBox="0 0 60 40"><path class="f-white" d="M20 15c1-12 20-12 21 0 0 6-5 8-5 14h-11c0-6-5-8-5-14z"/><path d="M25 32h11M27 36h7M24 17l3-4 3 4 4-3M10 14l5 3M51 14l-5 3M11 4l6 5M50 4l-6 5M10 30l6-4M50 30l-6-4M6 20h6M48 20h6" stroke-width="2"/></symbol>
    <symbol id="p-wend" viewBox="0 0 60 40"><path class="s-grey" d="M30 8l20-4v22l-20 4"/><path class="f-white" d="M12 11l18-4v28l-18 4z"/></symbol>
    <symbol id="p-morph" viewBox="0 0 60 40"><path class="f-white" d="M12 30C12 14 24 3 40 2c-3 10 4 14 10 18L30 40zM30 40c-6-12-6-28 10-38M12 30l18 10"/></symbol>
    <symbol id="p-mesh" viewBox="0 0 60 40"><path class="f-white" d="M-2 4c16-3 30-4 38-1 6 6 16 12 22 18l-22 12-18-4C12 20 5 10-2 4zM11 6c14 0 22 0 35 8M28 27c2-4 8-10 18-14M21 3c6 6 10 14 16 28"/></symbol>
    <symbol id="p-open" viewBox="0 0 60 40"><path class="f-white" d="M14 9l31-3v24l-31 6zM37 7v22M14 30l23-1 8 1"/></symbol>
    <symbol id="p-zone" viewBox="0 0 60 40"><path d="M10 2h8l8-1 14 0 3 14 6 2v20H48v2H22v-2H10z"/><path d="M22 6c2 8 10 8 16 2v12h-10M26 28h16M26 24h18M26 32h18" stroke-width="2"/></symbol>
    <symbol id="p-sect" viewBox="0 0 60 40"><path d="M4 18h30M34 18v8M34 30h24"/><path class="f-grey" d="M10 16l6-7 6 7zM42 28l6-7 6 7z"/></symbol>
    <symbol id="p-elev" viewBox="0 0 60 40"><path d="M4 31h52"/><path class="f-grey" d="M21 25l9-11 9 11z"/></symbol>
    <symbol id="p-int" viewBox="0 0 60 40"><ellipse cx="30" cy="20" rx="9" ry="7"/><path class="f-grey" d="M30 1l6 7H24zM30 39l6-7H24zM14 20l-6-5v10zM46 20l6-5v10z"/></symbol>
    <symbol id="p-det" viewBox="0 0 60 40"><ellipse cx="30" cy="20" rx="17" ry="17"/><path d="M20 5v30M20 15h27M20 25h27"/></symbol>
    <symbol id="p-sheet" viewBox="0 0 60 40"><path d="M7 36V2h26l12 12v22M33 2v12h12M20 30L36 15l4 3-16 15zM24 34h18"/></symbol>

    <!-- tabs -->
    <symbol id="floor" viewBox="0 0 36 34"><path class="f-white" d="M3 2h14l3 12h14v18H3z"/><path d="M8 2v8l5-3"/></symbol>
    <symbol id="cube" viewBox="0 0 36 36"><path d="M4 8l20-6v32L4 28zM24 2l8 6v20l-8 6" class="s-blue"/></symbol>
    <symbol id="light-t" viewBox="0 0 36 40"><path d="M12 14V8c0-7 12-7 12 0v6M8 14h20M12 14l-4 24M24 14l4 24M4 38h28M11 24h14M15 38V28h6v10"/></symbol>
    <symbol id="grid4" viewBox="0 0 40 40"><rect x="2" y="2" width="15" height="15"/><rect x="23" y="2" width="15" height="15"/><rect x="2" y="23" width="15" height="15"/><rect x="23" y="23" width="15" height="15"/></symbol>
    <symbol id="vieww" viewBox="0 0 48 40"><path d="M4 34V14L16 2l14 12v20zM16 2l-2 14H30M4 14h10M16 18v16"/><rect class="f-dark" x="34" y="26" width="2" height="8"/><rect class="f-dark" x="38" y="27" width="6" height="6"/><rect class="f-dark" x="38" y="35" width="6" height="4"/></symbol>

    <!-- status bar -->
    <symbol id="z-back" viewBox="0 0 32 36"><circle cx="16" cy="16" r="12"/><path d="M2 17h16M8 11l-6 6 6 6M9 26L4 36M23 26l5 10"/></symbol>
    <symbol id="z-fwd" viewBox="0 0 32 36"><circle class="s-grey" cx="16" cy="16" r="12"/><path class="s-grey" d="M30 17H14M24 11l6 6-6 6M9 26L4 36M23 26l5 10"/></symbol>
    <symbol id="z-in" viewBox="0 0 32 36"><circle cx="14" cy="14" r="12"/><path d="M8 14h12M14 8v12M21 25l6 11"/></symbol>
    <symbol id="orbit" viewBox="0 0 32 36"><path d="M9 24a11 11 0 1 1 12 1M14 20l6 4-2 8"/></symbol>
    <symbol id="walk" viewBox="0 0 32 36"><circle class="f-dark" cx="16" cy="4" r="2.4"/><path d="M16 9l-5 8M16 9l5 8M16 9v10l-6 13M16 19l5 13" stroke-width="2"/></symbol>
    <symbol id="z-fit" viewBox="0 0 32 36"><circle cx="14" cy="14" r="12"/><path class="f-dark" d="M14 3l3 5h-6zM14 25l3-5h-6zM3 14l5-3v6zM25 14l-5-3v6z"/><path d="M21 25l6 11"/></symbol>
    <symbol id="nodisp" viewBox="0 0 32 36"><path class="s-grey" d="M12 4l10 12-10 12L2 16zM20 34V16M15 22l5-6 5 6"/></symbol>
    <symbol id="scale" viewBox="0 0 32 36"><rect x="2" y="8" width="28" height="20"/><path d="M8 28v-6M14 28v-8M20 28v-6M26 28v-8"/></symbol>
    <symbol id="layers" viewBox="0 0 32 36"><path d="M8 2h22l-6 11H2zM2 13l-1 11h24l5-11M2 24v9h24l4-9"/></symbol>
    <symbol id="composite" viewBox="0 0 32 36"><rect x="3" y="4" width="26" height="28"/><path class="f-dark" d="M3 4h26v4H3zM3 28h26v4H3z"/><path d="M3 22l14-12M12 26l14-12M8 10l10 0M20 26l8-6"/></symbol>
    <symbol id="pencil" viewBox="0 0 32 36"><path d="M9 1v22l7 12 7-12V1M9 20h14"/></symbol>
    <symbol id="frame" viewBox="0 0 32 36"><rect x="2" y="4" width="28" height="28"/><path class="f-dark" d="M2 4h28v4H2zM2 28h28v4H2z"/><rect x="9" y="13" width="14" height="9"/></symbol>
    <symbol id="revopt" viewBox="0 0 32 36"><path d="M12 12H4v20h6"/><rect x="14" y="14" width="14" height="20"/><rect class="f-grey" x="16" y="16" width="10" height="16"/><path d="M14 6c2-5 10-5 12 0v6M22 9l4 4 4-4"/></symbol>
    <symbol id="renov" viewBox="0 0 32 36"><path class="s-grey" d="M4 32L12 20 10 30"/><path d="M14 2l12 24v9H12V26M18 35V25h5v10"/><path class="s-grey" d="M2 34h10"/></symbol>
    <symbol id="hstyle" viewBox="0 0 32 36"><path d="M2 18L12 4l5 7M6 34V18L15 8M12 34V22l8-6 10 6v12H12zM17 24h4v10M24 26h4v8"/></symbol>
    <symbol id="shade" viewBox="0 0 32 36"><path d="M4 14L12 4h18v22l-8 8H4zM4 14h18v20M22 14l8-10"/></symbol>

    <!-- navigator -->
    <symbol id="n-house" viewBox="0 0 44 34"><path d="M2 28V16L14 4l24 8 4 8v12H2zM14 4l8 12v16M22 16h20"/></symbol>
    <symbol id="n-map" viewBox="0 0 44 34"><rect x="1" y="2" width="40" height="30" stroke-width="3"/><path d="M6 25V15l8-8 16 5 6 7v6zM14 7l6 8v10M20 15h16"/></symbol>
    <symbol id="n-sheet" viewBox="0 0 44 34"><path d="M2 26V12L12 2v9h30v22H6zM12 2v9M30 24h12M30 28h12M30 24v8"/></symbol>
    <symbol id="n-stack" viewBox="0 0 44 34"><rect x="2" y="2" width="30" height="26" rx="3"/><path d="M2 9h30M36 5v26H8M40 8v26H14"/><rect x="6" y="3" width="14" height="5"/></symbol>
    <symbol id="lines" viewBox="0 0 40 24"><path d="M3 3h34M3 12h34M3 21h34" stroke-width="2"/></symbol>
    <symbol id="search" viewBox="0 0 28 28"><circle cx="12" cy="12" r="10" stroke-width="2.6"/><path d="M19 19l7 7" stroke-width="3"/></symbol>

    <!-- tree -->
    <symbol id="t-floor" viewBox="0 0 36 32"><path class="s-blue" d="M1 2h15l3 11h16v17H1z"/><path class="s-blue" d="M6 2v8l6-3"/></symbol>
    <symbol id="t-sect" viewBox="0 0 36 32"><path class="s-blue f-pale" d="M8 14h26v14H8z"/><path class="s-blue" d="M1 10l17-8 17 8M2 12h32"/><path class="f-dark" d="M1 30v-7c0-2 2-3 4-3h3v-3l5 5-5 5v-3H6c-1 0-1 1-1 2v4z"/></symbol>
    <symbol id="t-int" viewBox="0 0 36 32"><path class="s-blue f-pale" d="M2 2h33v28H2z"/><path class="s-blue" d="M6 8h10v20M22 8h10v10H22z"/><path class="f-dark" d="M1 30v-7c0-2 2-3 4-3h3v-3l5 5-5 5v-3H6c-1 0-1 1-1 2v4z"/></symbol>
    <symbol id="t-folder" viewBox="0 0 36 32"><path fill="#ebebeb" d="M1 30V4h13l4 4h17v22z"/><path d="M1 8h17"/></symbol>
    <symbol id="t-anim" viewBox="0 0 36 32"><path class="s-blue" d="M2 28c2 0 4 0 5-2M6 12h18v12H6a3 3 0 0 1-3-3v-6a3 3 0 0 1 3-3zM24 18l9-6v14zM10 8c3-6 10-6 14-3"/></symbol>
    <symbol id="t-cube" viewBox="0 0 36 32"><path class="s-blue" d="M2 6l22-5 10 6v18l-10 6L2 26zM24 1v30"/></symbol>

    <!-- navigator lower -->
    <symbol id="a-new" viewBox="0 0 46 36"><path d="M2 12h28v22H2z"/><path d="M6 30V22l8-6 14 5v9zM14 16l4 6v8M18 22h10"/><circle class="s-blue" cx="33" cy="11" r="10" fill="#ebebeb"/><path class="s-blue" d="M33 5v12M27 11h12"/></symbol>
    <symbol id="a-newc" viewBox="0 0 46 36"><path d="M6 12h24v22H6"/><path d="M8 26V22l6-6 14 5v9zM14 16l4 6v8M18 22h10"/><circle class="s-blue" cx="33" cy="11" r="10" fill="#ebebeb"/><path class="s-blue" d="M33 5v12M27 11h12"/><path class="f-dark" d="M1 36v-7c0-2 2-3 4-3h3v-3l5 5-5 5v-3H6c-1 0-1 1-1 2v4z"/></symbol>
    <symbol id="a-newf" viewBox="0 0 46 36"><path d="M2 34V12h11l3 4h16v18z"/><circle class="s-blue" cx="33" cy="11" r="10" fill="#ebebeb"/><path class="s-blue" d="M33 5v12M27 11h12"/></symbol>
    <symbol id="a-list" viewBox="0 0 46 36"><path class="s-blue f-pale" d="M9 10h28v16H9z" stroke-width="2.6"/><path class="s-blue" d="M14 15h2M14 21h2M20 15h13M20 21h13" stroke-width="2"/></symbol>
    <symbol id="a-del" viewBox="0 0 46 36"><path d="M10 5l26 26M36 5L10 31" stroke="#e8492c" stroke-width="3.4"/></symbol>
    <symbol id="d-cube" viewBox="0 0 40 28"><path class="s-blue" d="M8 5l16-3 8 4v16l-8 4-16-4zM24 2v24" stroke-width="3"/></symbol>
    <symbol id="d-layer" viewBox="0 0 40 28"><path d="M10 2h28l-8 8H2zM2 10l-1 3 28 0 9-8M1 13v4h28l9-9M1 17v6h28l9-9M1 23h28"/></symbol>
    <symbol id="d-scale" viewBox="0 0 40 28"><rect x="2" y="5" width="36" height="16"/><path d="M8 21v-5M14 21v-8M20 21v-5M26 21v-8M32 21v-5" stroke-width="1.8"/></symbol>
    <symbol id="d-cam" viewBox="0 0 40 28"><path d="M2 6h6l2-4h20l2 4h6v21H2z"/><ellipse cx="20" cy="15" rx="10" ry="8"/></symbol>
    <symbol id="o-dbl" viewBox="0 0 40 32"><path class="s-lblue" d="M10 28h28V12"/><rect class="s-grey" x="1" y="1" width="32" height="25" rx="3"/><path class="s-grey" d="M7 22V6h20"/></symbol>
    <symbol id="o-floor" viewBox="0 0 36 32"><path class="s-lblue" d="M1 2h15l3 11h16v17H1z"/><path class="s-lblue" d="M6 2v8l6-3"/></symbol>
    <symbol id="o-fit" viewBox="0 0 40 34"><path class="s-grey" d="M2 2h26v21H2z"/><path class="s-lblue" d="M12 23v9h26V12h-10"/><path class="s-grey" d="M8 6l18 16M8 14V6h8M26 14v8h-8"/></symbol>
    <symbol id="o-move" viewBox="0 0 40 34"><path class="s-lblue" d="M14 22H2V2h22v10"/><path class="s-grey" d="M24 12v20M14 22h20M19 17l5-5 5 5M19 27l5 5 5-5M18 18l-4 4 4 4M30 18l4 4-4 4"/></symbol>
    <symbol id="o-rot" viewBox="0 0 40 34"><path class="s-lblue" d="M2 10l18-8 8 10-14 16z"/><path class="s-grey" d="M18 26c6 2 12 0 16-8M24 30l-6-4 4-4M30 18l4-4 4 5"/></symbol>
    <symbol id="o-back" viewBox="0 0 40 34"><path class="s-lblue" d="M2 20V2h24v8M10 10h28v20H14"/><path class="s-grey" d="M16 14H30c6 0 6 10 0 10M14 14l6-5M14 14l6 5"/></symbol>
    <symbol id="o-sync" viewBox="0 0 40 34"><ellipse class="s-grey" cx="20" cy="17" rx="16" ry="15"/><path class="s-grey" d="M10 17c1-6 12-10 19-3M27 8l2 6-6 1M30 17c-1 6-12 10-19 3M13 26l-2-6 6-1"/></symbol>
    <symbol id="o-pie" viewBox="0 0 28 24"><circle cx="14" cy="12" r="12" fill="#a8c6ef" stroke="none"/><path d="M14 12L2 7a12 12 0 0 1 12-7z" fill="#a9d3a6" stroke="none"/><path d="M14 12V0a12 12 0 0 1 12 7z" fill="#f0a68f" stroke="none"/><path d="M14 12L2 7M14 12l12-5M14 12V0" stroke="#8d8d8d" stroke-width="1.4"/><circle cx="14" cy="12" r="12" stroke="#8d8d8d" stroke-width="1.6"/></symbol>
    <symbol id="b-hand" viewBox="0 0 40 34"><path class="s-lblue" d="M14 20H2V2h22v8"/><path class="s-grey" d="M14 30l-6-6 3-2 5 3V12a2 2 0 0 1 4 0v8-10a2 2 0 0 1 4 0v10-8a2 2 0 0 1 4 0v10-6a2 2 0 0 1 4 0l-2 18"/></symbol>
    <symbol id="b-over" viewBox="0 0 40 34"><path class="s-grey" d="M2 2h24v17H2z"/><path class="s-lblue" d="M14 10h24v20H14z"/><path class="s-grey" d="M14 16h12v-6"/></symbol>
    <symbol id="b-split" viewBox="0 0 40 34"><path class="s-grey" d="M18 6H2v24h16M10 14l-5 4 5 4"/><path class="s-lblue" d="M22 6h16v24H22"/><path class="s-grey" d="M20 0v34M30 14l5 4-5 4"/></symbol>
    <symbol id="b-hide" viewBox="0 0 40 34"><path class="s-grey" d="M2 2h24v18H2zM2 14L14 2M10 20L26 4"/><path class="s-grey" d="M12 26c8-10 18-10 26 0-8 8-18 8-26 0zM14 32L38 18"/></symbol>
    <symbol id="f-sync" viewBox="0 0 36 36"><path d="M3 24V4h26v5M9 31V10h18M9 31h12"/><path class="s-blue" d="M18 19c2-4 8-5 12-3l2 3M33 14v6h-6M34 24c-2 4-8 5-12 3l-2-3M19 30v-6h6"/></symbol>

    <!-- 3D texture -->
    <filter id="tex" x="0" y="0" width="100%" height="100%">
      <feTurbulence type="fractalNoise" baseFrequency="0.03 0.2" numOctaves="3" seed="4" result="n"/>
      <feColorMatrix in="n" type="matrix" values="0 0 0 0 .3  0 0 0 0 .35  0 0 0 0 .28  .22 0 0 0 -.05" result="m"/>
      <feComposite in="m" in2="SourceGraphic" operator="in" result="c"/>
      <feMerge><feMergeNode in="SourceGraphic"/><feMergeNode in="c"/></feMerge>
    </filter>
    <linearGradient id="topgrad" x1="0" y1="0" x2="0" y2="1"><stop offset="0" stop-color="#99aa93"/><stop offset="1" stop-color="#a3b49b"/></linearGradient>
    <linearGradient id="leftgrad" x1="0" y1="0" x2="1" y2="0"><stop offset="0" stop-color="#748a70"/><stop offset="1" stop-color="#84967e"/></linearGradient>
    <linearGradient id="rightgrad" x1="0" y1="0" x2="1" y2="0"><stop offset="0" stop-color="#5b6c58"/><stop offset="1" stop-color="#45573f"/></linearGradient>
  </defs>
</svg>

<div class="app-win d-flex flex-column">

  <!-- title bar -->
  <div class="title-bar d-flex align-items-center justify-content-center flex-none">
    <div class="lights d-flex"><span class="light"></span><span class="light"></span><span class="light"></span></div>
    <svg width="22" height="30" class="me-2"><path d="M3 1h11l6 6v22H3z" stroke="#d4d4d4" stroke-width="1.6" fill="#eee"/><path d="M6 10l4-6M7 16h10M7 22h10" stroke="#d4d4d4" stroke-width="1.4"/></svg>
    <span class="title-text">Archicad Demoprojekt Bürogebäude.pln</span>
  </div>

  <!-- toolbars -->
  <div class="tools-zone flex-none">
    <div class="tool-row d-flex align-items-center">
      <span class="tgrip"></span>
      <span class="tbtn"><svg><use href="#home"/></svg></span><span class="tsep tsep-n"></span>
      <span class="tbtn"><svg><use href="#save"/></svg></span><span class="tsep tsep-w"></span>
      <span class="tbtn"><svg><use href="#undo"/></svg></span>
      <span class="tbtn"><svg><use href="#redo"/></svg></span><span class="tsep tsep-x"></span>
      <span class="tbtn"><svg><use href="#mzoom"/></svg></span>
      <span class="tbtn"><svg><use href="#drop"/></svg></span>
      <span class="tbtn"><svg><use href="#dropt"/></svg></span>
      <span class="tbtn"><svg><use href="#hammer"/></svg></span><span class="tsep"></span>
      <span class="tbtn"><svg><use href="#xcross"/></svg></span>
      <span class="tbtn"><svg><use href="#ruler"/></svg></span>
      <span class="tbtn is-on"><svg><use href="#square"/></svg></span><span class="tchev is-on"><svg><use href="#cd"/></svg></span>
      <span class="tbtn is-on"><svg><use href="#checkl"/></svg></span><span class="tchev is-on"><svg><use href="#cd"/></svg></span>
      <span class="tbtn is-on"><svg><use href="#xy"/></svg></span><span class="tchev is-on"><svg><use href="#cd"/></svg></span>
      <span class="tbtn"><svg><use href="#gridsn"/></svg></span><span class="tchev"><svg><use href="#cd"/></svg></span>
      <span class="tbtn"><svg><use href="#plane"/></svg></span><span class="tchev"><svg><use href="#cd"/></svg></span>
      <span class="tbtn"><svg><use href="#offset"/></svg></span><span class="tchev"><svg><use href="#cd"/></svg></span>
      <span class="tbtn"><svg><use href="#lockg"/></svg></span><span class="tchev"><svg><use href="#cd"/></svg></span>
      <span class="tbtn"><svg><use href="#layg"/></svg></span><span class="tchev"><svg><use href="#cd"/></svg></span>
      <span class="tbtn is-on"><svg><use href="#viewact"/></svg></span><span class="tchev is-on"><svg><use href="#cd"/></svg></span>
      <span class="tbtn"><svg><use href="#nodes"/></svg></span><span class="tchev"><svg><use href="#cd"/></svg></span><span class="tsep tsep-m"></span>
      <span class="tbtn"><svg><use href="#star"/></svg></span>
      <span class="tbtn"><svg><use href="#housest"/></svg></span>
      <span class="tbtn"><svg><use href="#frameh"/></svg></span>
      <span class="tbtn"><svg><use href="#keyb"/></svg></span>
      <span class="tbtn"><svg><use href="#cloudd"/></svg></span>
      <span class="tbtn"><svg><use href="#flagd"/></svg></span>
      <span class="tbtn"><svg><use href="#tagd"/></svg></span>
      <span class="tbtn"><svg><use href="#penh"/></svg></span><span class="tchev"><svg><use href="#cd"/></svg></span>
      <span class="tbtn"><svg><use href="#circtri"/></svg></span><span class="tchev"><svg><use href="#cd"/></svg></span><span class="tsep tsep-x"></span>
      <span class="tbtn"><svg><use href="#sciss"/></svg></span>
      <span class="tbtn"><svg><use href="#axe"/></svg></span>
      <span class="tbtn"><svg><use href="#arrup"/></svg></span>
      <span class="tbtn"><svg><use href="#extend"/></svg></span>
      <span class="tbtn"><svg><use href="#split"/></svg></span>
      <span class="tbtn"><svg><use href="#corner"/></svg></span>
      <span class="tbtn"><svg><use href="#cornerc"/></svg></span>
      <span class="tbtn"><svg><use href="#harr"/></svg></span>
    </div>
    <div class="tool-row d-flex align-items-center">
      <span class="tgrip"></span>
      <span class="tbtn"><svg><use href="#move"/></svg></span><span class="tchev"><svg><use href="#cd"/></svg></span>
      <span class="tbtn"><svg><use href="#rotate"/></svg></span><span class="tchev"><svg><use href="#cd"/></svg></span>
      <span class="tbtn"><svg><use href="#percent"/></svg></span><span class="tchev"><svg><use href="#cd"/></svg></span>
      <span class="tbtn"><svg><use href="#multi"/></svg></span>
    </div>
  </div>

  <!-- info box -->
  <div class="info-box d-flex flex-none">
    <div class="info-col info-first">
      <div class="info-lbl">Haupt:</div>
      <div class="d-flex haupt-row">
        <div class="haupt-grip"></div>
        <div class="haupt-left">
          <div class="info-lbl">Alle aktiven: 1</div>
          <div class="d-flex haupt-btns">
            <div class="white-btn justify-content-between px-1 hb-small"><svg width="44" height="34"><use href="#gHaupt1"/></svg><svg class="rchev"><use href="#cr"/></svg></div>
            <div class="white-btn justify-content-between px-1 hb-small"><svg width="44" height="34"><use href="#gHaupt2"/></svg><svg class="rchev"><use href="#cr"/></svg></div>
            <div class="grey-btn hb-small"><svg width="44" height="36"><use href="#magnet"/></svg></div>
          </div>
        </div>
        <div class="white-btn hb-big"><svg width="60" height="40"><use href="#p-slab"/></svg></div>
        <div class="white-btn hb-tiny"><svg class="rchev"><use href="#cr"/></svg></div>
      </div>
    </div>
    <div class="info-col">
      <div class="info-lbl">Ebene:</div>
      <div class="white-btn row-top ebene-btn txt-20"><svg width="30" height="30" class="ebene-eye"><use href="#eye"/></svg><span class="flex-grow-1">Archicad-Ebene</span><svg class="rchev me-2"><use href="#cr"/></svg></div>
    </div>
    <div class="info-col">
      <div class="info-lbl">Geometriemethode:</div>
      <div class="d-flex row-top">
        <div class="plain-ic geo-ic"><svg width="48" height="44"><use href="#geo1"/></svg></div>
        <div class="grey-btn geo-ic"><svg width="48" height="44"><use href="#geo2"/></svg></div>
        <div class="plain-ic geo-ic"><svg width="48" height="44"><use href="#geo3"/></svg></div>
      </div>
    </div>
    <div class="info-col">
      <div class="info-lbl">Lage der Referenzebene:</div>
      <div class="d-flex row-top ref-box">
        <div class="plain-ic geo-ic"><svg width="48" height="36"><use href="#ref1"/></svg></div>
        <div class="grey-btn geo-ic"><svg width="48" height="36"><use href="#ref2"/></svg></div>
      </div>
    </div>
    <div class="info-col">
      <div class="info-lbl">Struktur:</div>
      <div class="d-flex row-top gap-1 txt-20">
        <div class="white-btn str-a justify-content-between"><svg width="36" height="26" class="ms-3"><use href="#hatch"/></svg><svg class="rchev me-2"><use href="#cr"/></svg></div>
        <div class="white-btn str-b"><span class="sw-dots ms-3"></span><span class="sw-blank"></span><span class="str-txt flex-grow-1">Zement…</span><svg class="rchev me-2"><use href="#cr"/></svg></div>
      </div>
    </div>
    <div class="info-col">
      <div class="info-lbl">Deckendicke:</div>
      <div class="d-flex align-items-center thick-row">
        <svg width="48" height="36" class="thick-ic"><use href="#thick"/></svg>
        <div class="form-control fld thick-fld">0,063</div>
      </div>
    </div>
    <div class="info-col">
      <div class="info-lbl">Unter- und Oberkante:</div>
      <div class="d-flex tb-row">
        <svg width="76" height="50"><use href="#topbot"/></svg>
        <div class="tb-fields">
          <div class="form-control fld tb-fld mb-2">0,063</div>
          <div class="form-control fld tb-fld">3,500</div>
        </div>
        <div class="white-btn tiny-chev tb-chev"><svg class="rchev"><use href="#cr"/></svg></div>
      </div>
    </div>
    <div class="info-col">
      <div class="info-lbl">Verknüpfte Geschosse:</div>
      <div class="txt-20 link-head">Ursprungsgeschoss:</div>
      <div class="d-flex align-items-center txt-20 link-row">
        <svg width="48" height="36"><use href="#linkh"/></svg>
        <span class="flex-grow-1 link-txt">-1. Untergeschoss</span>
        <div class="white-btn tiny-chev"><svg class="rchev"><use href="#cr"/></svg></div>
      </div>
    </div>
    <div class="info-col info-last">
      <div class="info-lbl">ID und Eigenschaften:</div>
      <div class="form-control fld id-fld txt-20">Abhangdecke 1-014</div>
    </div>
  </div>

  <!-- main -->
  <div class="main-zone d-flex flex-none">

    <!-- tool box -->
    <aside class="left-panel d-flex flex-column">
      <div class="drag-grip grip-left"></div>
      <div class="tool-item tool-sel"><svg><use href="#p-arrow"/></svg>Pfeil</div>
      <div class="tool-item marq-item"><svg><use href="#p-marq"/></svg>Markierungsrahmen</div>
      <div class="sect-head"><span class="tri-down"></span>Planung</div>
      <div class="tool-list-top"></div>
      <div class="tool-item"><svg><use href="#p-wall"/></svg>Wand</div>
      <div class="tool-item"><svg><use href="#p-door"/></svg>Tür</div>
      <div class="tool-item"><svg><use href="#p-window"/></svg>Fenster</div>
      <div class="tool-item"><svg><use href="#p-slab"/></svg>Decke</div>
      <div class="tool-item"><svg><use href="#p-col"/></svg>Stütze</div>
      <div class="tool-item"><svg><use href="#p-beam"/></svg>Träger</div>
      <div class="tool-item"><svg><use href="#p-roof"/></svg>Dach</div>
      <div class="tool-item"><svg><use href="#p-shell"/></svg>Schale</div>
      <div class="tool-item"><svg><use href="#p-skyl"/></svg>Dachfenster</div>
      <div class="tool-item"><svg><use href="#p-curt"/></svg>Fassade</div>
      <div class="tool-item"><svg><use href="#p-stair"/></svg>Treppe</div>
      <div class="tool-item"><svg><use href="#p-rail"/></svg>Geländer</div>
      <div class="tool-item"><svg><use href="#p-chair"/></svg>Objekt</div>
      <div class="tool-item"><svg><use href="#p-light"/></svg>Lichtquelle</div>
      <div class="tool-item"><svg><use href="#p-wend"/></svg>Wandabschluss</div>
      <div class="tool-item"><svg><use href="#p-morph"/></svg>Morph</div>
      <div class="tool-item"><svg><use href="#p-mesh"/></svg>Freifläche</div>
      <div class="tool-item"><svg><use href="#p-open"/></svg>Öffnung</div>
      <div class="tool-item"><svg><use href="#p-zone"/></svg>Raum</div>
      <div class="sect-head sect-sicht"><span class="tri-down"></span>Sichten</div>
      <div class="views-wrap">
        <div class="tool-item is-off"><svg><use href="#p-sect"/></svg>Schnitt</div>
        <div class="tool-item is-off"><svg><use href="#p-elev"/></svg>Ansicht</div>
        <div class="tool-item is-off"><svg><use href="#p-int"/></svg>Innenansicht</div>
        <div class="tool-item is-off"><svg><use href="#p-det"/></svg>Detail</div>
        <div class="tool-item is-off"><svg><use href="#p-sheet"/></svg>Arbeitsblatt</div>
        <div class="views-track"><div class="views-thumb"></div></div>
      </div>
      <div class="sect-head sect-doc"><span class="tri-right"></span>Dokumentation</div>
    </aside>

    <!-- centre -->
    <div class="center-col d-flex flex-column">
      <div class="tab-strip d-flex align-items-stretch">
        <div class="grid-btn d-flex align-items-center justify-content-center"><svg width="38" height="38"><use href="#grid4"/></svg></div>
        <div class="view-tab d-flex align-items-center justify-content-center"><svg><use href="#floor"/></svg>[-1. Untergeschoss]</div>
        <div class="view-tab tab-on d-flex align-items-center justify-content-center"><svg><use href="#cube"/></svg>(!) Allgemeine Perspektive [3D / Auswahl, Gesch…</div>
        <div class="view-tab tab-rule d-flex align-items-center justify-content-center position-relative"><svg><use href="#light-t"/></svg><span class="tab-dot"></span>[Aktions-Center]</div>
        <div class="tab-view d-flex align-items-center justify-content-center gap-2"><svg width="42" height="35"><use href="#vieww"/></svg><svg width="16" height="12"><use href="#cd"/></svg></div>
      </div>

      <div class="canvas-3d">
        <svg viewBox="380 422 2338 1504">
          <polygon points="503,924 1586,869 2684,935 1387,1259" fill="url(#topgrad)" stroke="none" filter="url(#tex)"/>
          <polygon points="503,924 1387,1259 1407,1313 509,946" fill="url(#leftgrad)" stroke="none"/>
          <polygon points="1387,1259 2684,935 2680,957 1407,1313" fill="url(#rightgrad)" stroke="none"/>
          <polygon points="511,947 1389,1319 1407,1313" fill="#fff" stroke="none"/>
          <path d="M507 944L1586 882L2680 955" stroke="#5b75ab" stroke-width="6"/>
          <path d="M507 944L1389 1319L2680 955" stroke="#0000f5" stroke-width="6.5"/>
          <path d="M503 924L1586 869L2684 935L1387 1259Z" stroke="#52b52e" stroke-width="3"/>
          <path d="M509 946L1407 1313L1387 1259M2684 935L2680 955" stroke="#52b52e" stroke-width="2.4"/>
          <g stroke="none" fill="#000">
            <ellipse cx="503" cy="924" rx="6" ry="6.5"/><ellipse cx="507" cy="944" rx="6" ry="6.5"/>
            <ellipse cx="1387" cy="1259" rx="6" ry="6.5"/><ellipse cx="1389" cy="1319" rx="6" ry="6.5"/>
            <ellipse cx="1586" cy="869" rx="6" ry="6.5"/><ellipse cx="2684" cy="935" rx="6" ry="6.5"/><ellipse cx="2680" cy="955" rx="6" ry="6.5"/>
          </g>
          <ellipse cx="1586" cy="882" rx="5" ry="5" fill="#000" fill-opacity=".3" stroke="none"/>
        </svg>
        <div class="float-tab ft-top ft-a"><span class="dash-h"></span></div>
        <div class="float-tab ft-top ft-b"><svg viewBox="0 0 48 16"><path d="M2 8h6M40 8h6" stroke-width="1.8"/><path d="M12 8c6-7 18-7 24 0-6 7-18 7-24 0z" stroke-width="1.8"/><circle class="f-dark" cx="24" cy="8" r="4"/></svg></div>
        <div class="float-tab ft-left"><span class="dash-v"></span></div>
        <div class="float-tab ft-right"><span class="dash-v"></span></div>
        <div class="float-tab ft-bottom"><span class="dash-h"></span></div>
      </div>

      <div class="stat-bar d-flex align-items-center">
        <div class="stat-tool stat-tool-a d-flex align-items-center"><svg><use href="#z-back"/></svg><svg><use href="#z-fwd"/></svg><svg><use href="#z-in"/></svg></div>
        <div class="stat-tool stat-tool-b d-flex align-items-center"><svg><use href="#orbit"/></svg><svg><use href="#walk"/></svg></div>
        <div class="stat-seg stat-wide d-flex align-items-center"><svg><use href="#z-fit"/></svg><span class="stat-txt is-off">keine D…</span><svg class="stat-chev"><use href="#crg"/></svg></div>
        <div class="stat-seg stat-wide d-flex align-items-center"><svg><use href="#nodisp"/></svg><span class="stat-txt is-off">keine D…</span><svg class="stat-chev"><use href="#crg"/></svg></div>
        <div class="stat-seg stat-wide d-flex align-items-center"><svg><use href="#scale"/></svg><span class="stat-txt scale-txt">1:100</span><svg class="stat-chev"><use href="#cr"/></svg></div>
        <div class="stat-seg stat-wide d-flex align-items-center"><svg><use href="#layers"/></svg><span class="stat-txt">50 - 1-5…</span><svg class="stat-chev"><use href="#cr"/></svg></div>
        <div class="stat-seg d-flex align-items-center"><svg><use href="#composite"/></svg><span class="stat-txt">Komple…</span><svg class="stat-chev"><use href="#cr"/></svg></div>
        <div class="stat-seg d-flex align-items-center"><svg><use href="#pencil"/></svg><span class="stat-txt">04 S/W…</span><svg class="stat-chev"><use href="#cr"/></svg></div>
        <div class="stat-seg d-flex align-items-center"><svg><use href="#frame"/></svg><span class="stat-txt">50 Ausf…</span><svg class="stat-chev"><use href="#cr"/></svg></div>
        <div class="stat-seg d-flex align-items-center"><svg><use href="#revopt"/></svg><span class="stat-txt">50 Ausf…</span><svg class="stat-chev"><use href="#cr"/></svg></div>
        <div class="stat-seg d-flex align-items-center"><svg><use href="#renov"/></svg><span class="stat-txt">00 Rein…</span><svg class="stat-chev"><use href="#cr"/></svg></div>
        <div class="stat-seg d-flex align-items-center"><svg><use href="#hstyle"/></svg><span class="stat-txt">Ohne D…</span><svg class="stat-chev"><use href="#cr"/></svg></div>
        <div class="stat-seg stat-last d-flex align-items-center"><svg><use href="#shade"/></svg><span class="stat-txt">Schatti…</span><svg class="stat-chev"><use href="#cr"/></svg></div>
      </div>
    </div>

    <!-- navigator -->
    <aside class="right-panel d-flex flex-column">
      <div class="drag-grip grip-right"></div>
      <div class="nav-tabs-box d-flex flex-none">
        <div class="nav-ic"><svg><use href="#n-house"/></svg></div>
        <span class="nav-rule"></span>
        <div class="nav-ic is-on"><svg><use href="#n-map"/></svg></div>
        <div class="nav-ic nav-next"><svg><use href="#n-sheet"/></svg></div>
        <div class="nav-ic nav-next"><svg><use href="#n-stack"/></svg></div>
        <div class="white-btn nav-menu ms-auto"><svg width="26" height="16" class="ms-3"><use href="#lines"/></svg><svg class="rchev ms-2"><use href="#cr"/></svg></div>
      </div>
      <div class="search-box d-flex align-items-center flex-none"><svg width="26" height="26"><use href="#search"/></svg>Ausschnitt-Mappe durchsuchen</div>

      <div class="map-tree">
        <div class="v-track"></div><div class="v-scroll"></div>
        <div class="tree-line lv4"><span class="slot"></span><svg class="tr-ic"><use href="#t-floor"/></svg>1. Obergeschoss</div>
        <div class="tree-line lv4"><span class="slot"></span><svg class="tr-ic"><use href="#t-floor"/></svg>0. Erdgeschoss</div>
        <div class="tree-line lv4"><span class="slot"></span><svg class="tr-ic"><use href="#t-floor"/></svg>-1. Untergeschoss</div>
        <div class="tree-line lv4"><span class="slot"></span><svg class="tr-ic"><use href="#t-floor"/></svg>-2. Fundamente</div>
        <div class="tree-line"><span class="slot"><svg><use href="#trc"/></svg></span><svg class="tr-ic"><use href="#t-sect"/></svg>Schnitte</div>
        <div class="tree-line"><span class="slot"><svg><use href="#trc"/></svg></span><svg class="tr-ic"><use href="#t-sect"/></svg>Ansichten</div>
        <div class="tree-line"><span class="slot"><svg><use href="#trc"/></svg></span><svg class="tr-ic"><use href="#t-int"/></svg>Innenansichten</div>
        <div class="tree-line lv2"><span class="slot"><svg><use href="#trc"/></svg></span><svg class="tr-ic"><use href="#t-folder"/></svg>Detailplanung</div>
        <div class="tree-line lv1"><span class="slot"><svg><use href="#trc"/></svg></span><svg class="tr-ic"><use href="#t-folder"/></svg>Listen und Berechnungnen</div>
        <div class="tree-line lv1"><span class="slot"><svg><use href="#trd"/></svg></span><svg class="tr-ic"><use href="#t-folder"/></svg>3D-Modell</div>
        <div class="tree-line lv2"><span class="slot"><svg><use href="#trc"/></svg></span><svg class="tr-ic tr-wide"><use href="#t-anim"/></svg>Animationsroute</div>
        <div class="tree-line lv2"><span class="slot"></span><svg class="tr-ic"><use href="#t-cube"/></svg>Gesamtmodell</div>
        <div class="tree-line lv2 tree-sel"><span class="slot"></span><svg class="tr-ic"><use href="#t-cube"/></svg>Allgemeine Perspektive</div>
      </div>
      <div class="h-scroll"></div>

      <div class="act-row d-flex align-items-start">
        <div class="act-ic"><svg><use href="#a-new"/></svg></div>
        <div class="act-ic"><svg><use href="#a-newc"/></svg></div>
        <div class="act-ic"><svg><use href="#a-newf"/></svg></div>
        <div class="act-ic"><svg><use href="#a-list"/></svg></div>
        <div class="act-ic"><svg><use href="#a-del"/></svg></div>
      </div>

      <div class="pad-box flex-none">
        <div class="sect-head head-desc"><span class="tri-down"></span>Beschreibungen</div>
        <div class="d-flex align-items-center desc-top">
          <svg><use href="#d-cube"/></svg>
          <div class="form-control fld desc-field desc-a"></div>
          <div class="form-control fld desc-field desc-b">Allgemeine Perspektive</div>
        </div>
        <div class="desc-line d-flex align-items-center"><svg><use href="#d-layer"/></svg>50 - 1-50 Grundriss</div>
        <div class="desc-line d-flex align-items-center"><svg><use href="#d-scale"/></svg>1:100</div>
        <div class="desc-line d-flex align-items-center"><svg><use href="#d-cam"/></svg>3D-Fenster</div>
        <button class="btn wide-btn">Einstellungen…</button>
      </div>
      <div class="h-rule mt-2"></div>
      <div class="drag-grip grip-right2"></div>

      <div class="d-flex off-row">
        <div class="off-btn off-a justify-content-center"><svg width="40" height="32"><use href="#o-dbl"/></svg></div>
        <div class="off-btn off-b"><svg width="36" height="32" class="ms-2"><use href="#o-floor"/></svg><span class="off-txt flex-grow-1">2. Obergeschoss (\Archicad Demopr…</span><svg class="rchev me-2"><use href="#crg"/></svg></div>
      </div>
      <div class="d-flex off-icons align-items-center">
        <svg width="40" height="34" class="oi-a"><use href="#o-fit"/></svg>
        <svg width="40" height="34" class="oi-b"><use href="#o-move"/></svg>
        <svg width="40" height="34" class="oi-c"><use href="#o-rot"/></svg>
        <svg width="40" height="34" class="oi-c"><use href="#o-back"/></svg>
        <svg width="40" height="34" class="oi-c"><use href="#o-sync"/></svg>
      </div>
      <div class="h-rule"></div>

      <div class="pad-box trans-box">
        <div class="mini-lbl">Transparentpause:</div>
        <div class="d-flex align-items-center slider-row">
          <div class="off-btn off-a justify-content-center gap-2"><span class="swatch-blue"></span><svg class="rchev"><use href="#crg"/></svg></div>
          <div class="slider-box"><div class="slider-line"></div>
            <span class="slider-tick t0"></span><span class="slider-tick t1"></span><span class="slider-tick t2"></span><span class="slider-tick t3"></span><span class="slider-tick t4"></span><span class="slider-tick t5"></span><span class="slider-tick t6"></span><span class="slider-tick t7"></span><span class="slider-tick t8"></span><span class="slider-tick t9"></span><span class="slider-tick t10"></span>
            <span class="slider-knob knob-mid"></span></div>
          <div class="off-btn off-c justify-content-center"><svg class="rchev"><use href="#crg"/></svg></div>
        </div>
        <div class="mini-lbl aktiv-lbl">Aktiv:</div>
        <div class="d-flex align-items-center slider-row">
          <div class="off-btn off-a justify-content-center gap-2"><svg width="28" height="24"><use href="#o-pie"/></svg><svg class="rchev"><use href="#crg"/></svg></div>
          <div class="slider-box"><div class="slider-line"></div>
            <span class="slider-tick t0"></span><span class="slider-tick t1"></span><span class="slider-tick t2"></span><span class="slider-tick t3"></span><span class="slider-tick t4"></span><span class="slider-tick t5"></span><span class="slider-tick t6"></span><span class="slider-tick t7"></span><span class="slider-tick t8"></span><span class="slider-tick t9"></span><span class="slider-tick t10"></span>
            <span class="slider-knob knob-end"></span></div>
        </div>
      </div>
      <div class="h-rule trans-rule"></div>
      <div class="bottom-tools d-flex align-items-start">
        <div class="bt-ic bt-first"><svg width="40" height="34"><use href="#b-hand"/></svg></div>
        <div class="bt-ic bt-on"><svg width="40" height="34"><use href="#b-over"/></svg></div>
        <div class="bt-ic"><svg width="40" height="34"><use href="#b-split"/></svg></div>
        <div class="bt-ic"><svg width="40" height="34"><use href="#b-hide"/></svg></div>
      </div>
    </aside>
  </div>

  <!-- footer -->
  <div class="foot-bar">
    <div class="foot-wrap">
      <svg class="foot-sync"><use href="#f-sync"/></svg>
      <span class="foot-sep"></span>
      <span class="foot-brand">GRAPHISOFT <span>ID</span></span>
    </div>
  </div>
</div>
</body>
</html>
